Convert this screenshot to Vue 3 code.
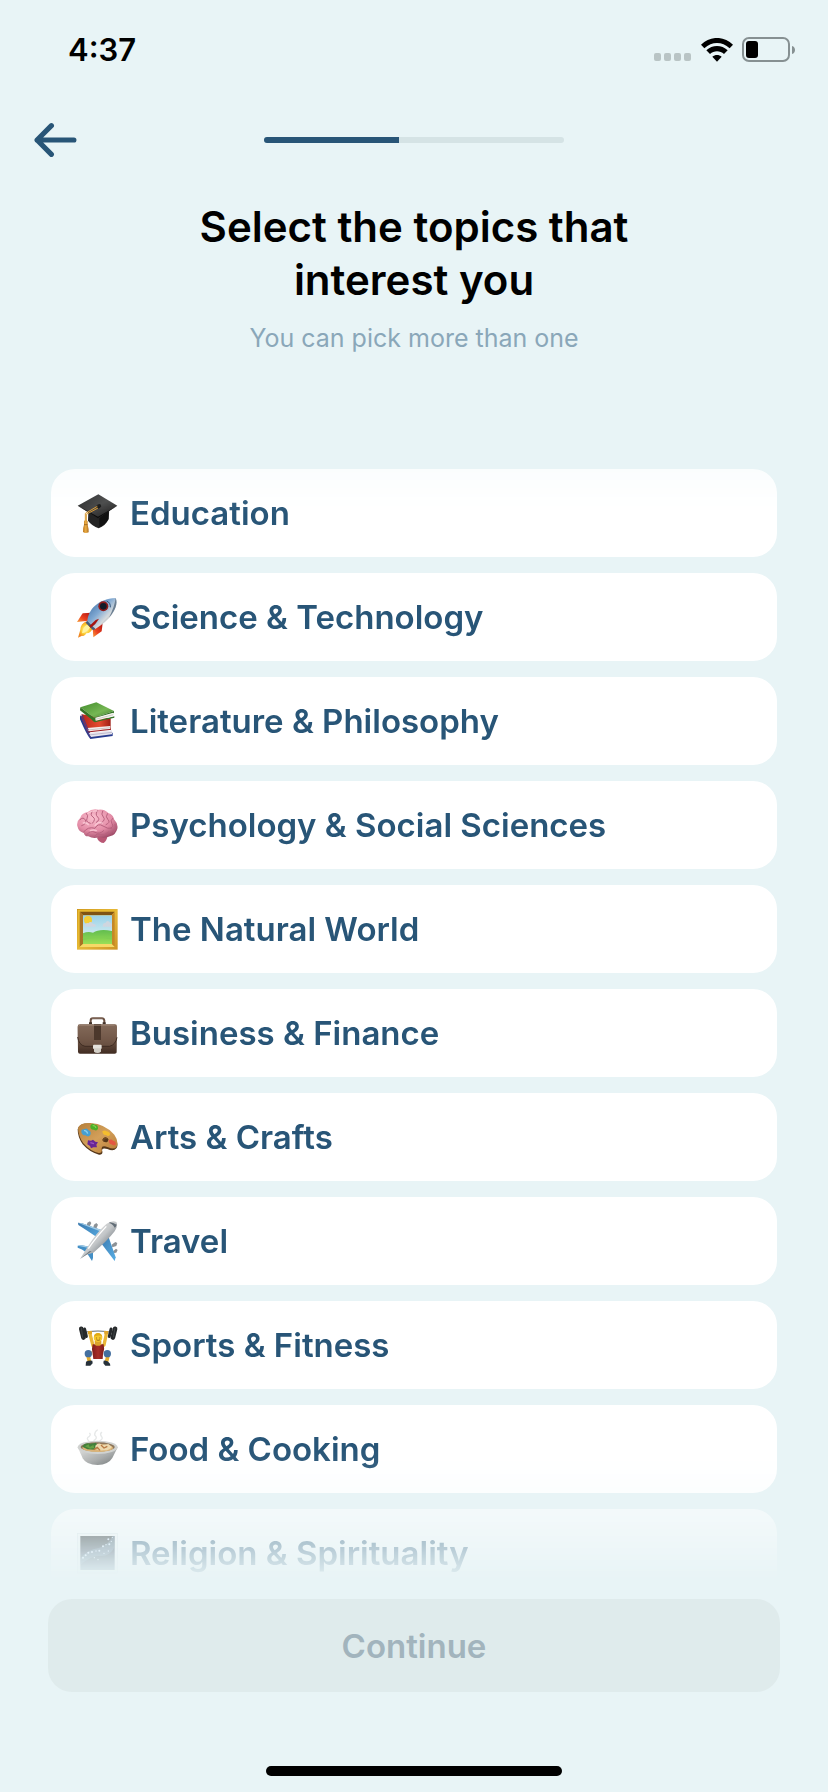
<script setup>
import { ref } from 'vue'

const topics = [
  { id: 'education', label: 'Education' },
  { id: 'science', label: 'Science & Technology' },
  { id: 'literature', label: 'Literature & Philosophy' },
  { id: 'psychology', label: 'Psychology & Social Sciences' },
  { id: 'nature', label: 'The Natural World' },
  { id: 'business', label: 'Business & Finance' },
  { id: 'arts', label: 'Arts & Crafts' },
  { id: 'travel', label: 'Travel' },
  { id: 'sports', label: 'Sports & Fitness' },
  { id: 'food', label: 'Food & Cooking' },
  { id: 'religion', label: 'Religion & Spirituality' }
]
const picked = ref([])
const progress = 45

function toggle(id) {
  picked.value = picked.value.includes(id)
    ? picked.value.filter((p) => p !== id)
    : [...picked.value, id]
}
</script>

<template>
  <div class="screen">
    <div class="status">
      <span class="time">4:37</span>
      <div class="status-icons">
        <svg class="signal" viewBox="0 0 38 8" aria-hidden="true">
          <rect x="0" y="0" width="7" height="8" rx="2" />
          <rect x="10" y="0" width="7" height="8" rx="2" />
          <rect x="20" y="0" width="7" height="8" rx="2" />
          <rect x="30" y="0" width="7" height="8" rx="2" />
        </svg>
        <svg class="wifi" viewBox="0 0 96 72" aria-hidden="true">
          <path d="M0 20C28-7 68-7 96 20L86 31C63 10 33 10 10 31Z" />
          <path d="M16 37C34 20 62 20 80 37L69 48C57 37 39 37 27 48Z" />
          <path d="M34 56C42 49 54 49 62 56L48 71Z" />
        </svg>
        <svg class="battery" viewBox="0 0 53 26" aria-hidden="true">
          <rect x="1" y="1" width="46" height="23" rx="6" fill="none" stroke="#869092" stroke-width="2" />
          <rect x="4" y="4" width="12" height="17" rx="3" fill="#000" />
          <path d="M50 9C54 10 54 16 50 17Z" fill="#869092" />
        </svg>
      </div>
    </div>

    <header class="nav">
      <button class="back" type="button" aria-label="Back">
        <svg viewBox="0 0 42 34" aria-hidden="true">
          <path d="M17 3L3 17L17 31M3 17H39" />
        </svg>
      </button>
      <div class="track" role="progressbar" aria-label="Progress" :aria-valuenow="progress" aria-valuemin="0" aria-valuemax="100">
        <div class="fill" :style="{ width: progress + '%' }"></div>
      </div>
    </header>

    <div class="intro">
      <h1>Select the topics that interest you</h1>
      <p>You can pick more than one</p>
    </div>

    <ul class="topics">
      <li v-for="t in topics" :key="t.id">
        <button class="topic" type="button" :aria-pressed="picked.includes(t.id)" @click="toggle(t.id)">
          <svg v-if="t.id === 'education'" class="icon" viewBox="0 0 126 126" aria-hidden="true">
            <defs>
              <linearGradient id="cap" x1="0" y1="0" x2="1" y2="1">
                <stop offset="0" stop-color="#1c1c1c" /><stop offset=".5" stop-color="#454545" /><stop offset="1" stop-color="#1b1b1b" />
              </linearGradient>
              <linearGradient id="tassel" x1="0" y1="0" x2="1" y2="0">
                <stop offset="0" stop-color="#b9741b" /><stop offset=".5" stop-color="#edaf45" /><stop offset="1" stop-color="#a9681b" />
              </linearGradient>
            </defs>
            <path d="M37 60L36 86Q48 102 68 109Q88 102 98 82L100 49L66 75Z" fill="#242424" />
            <path d="M70 79L98 55L97 81Q88 98 70 106Z" fill="#111" />
            <path d="M5 41L67 7L124 41L66 79Z" fill="url(#cap)" />
            <path d="M5 41L66 79L124 41L66 74Z" fill="#0c0c0c" />
            <ellipse cx="68" cy="43" rx="8" ry="6" fill="#151515" transform="rotate(-30 68 43)" />
            <path d="M64 43L28 64V94M66 48L31 67V94" fill="none" stroke="#d89a35" stroke-width="3" />
            <path d="M24 88Q29 80 35 88V98Q39 113 38 121Q28 126 21 120Q20 109 24 98Z" fill="url(#tassel)" />
            <path d="M24 98H35" stroke="#8a5212" stroke-width="2" />
          </svg>

          <svg v-else-if="t.id === 'science'" class="icon" viewBox="0 0 126 126" aria-hidden="true">
            <defs>
              <linearGradient id="hull" x1="0" y1="0" x2="1" y2="1">
                <stop offset="0" stop-color="#2f6199" /><stop offset=".42" stop-color="#7fa8d2" /><stop offset=".64" stop-color="#d5dadd" /><stop offset="1" stop-color="#696e72" />
              </linearGradient>
              <linearGradient id="fin" x1="1" y1="0" x2="0" y2="1">
                <stop offset="0" stop-color="#b01310" /><stop offset=".6" stop-color="#ec4220" /><stop offset="1" stop-color="#f7a23c" />
              </linearGradient>
              <radialGradient id="flame"><stop offset="0" stop-color="#fff7a8" /><stop offset=".6" stop-color="#fbc92d" /><stop offset="1" stop-color="#ef8623" /></radialGradient>
            </defs>
            <path d="M46 50L20 52L3 78L37 74Z" fill="url(#fin)" />
            <path d="M80 80L77 106L52 124L50 96Z" fill="url(#fin)" />
            <path d="M31 76Q14 83 13 101L6 125L18 119Q25 123 31 112Q46 112 51 94Z" fill="url(#flame)" />
            <path d="M33 86Q21 91 18 112Q36 108 42 94Z" fill="#fff4a0" />
            <path d="M34 74C37 42 64 9 119 6C128 28 112 66 58 99Z" fill="url(#hull)" />
            <path d="M119 6C126 23 118 43 99 65Q116 31 119 6Z" fill="#6b7f93" />
            <path d="M34 74L58 99L51 103L29 80Z" fill="#445d7b" />
            <path d="M40 90L59 72L69 68L58 84L44 96Z" fill="#a51512" />
            <circle cx="82" cy="31" r="15" fill="#8d1b1b" />
            <circle cx="82" cy="31" r="10" fill="#111b29" />
            <path d="M92 15Q104 20 103 34" fill="none" stroke="#31557d" stroke-width="3" />
          </svg>

          <svg v-else-if="t.id === 'literature'" class="icon" viewBox="0 0 126 126" aria-hidden="true">
            <defs>
              <linearGradient id="greenbook" x1="0" y1="0" x2="1" y2="1"><stop offset="0" stop-color="#438d2d" /><stop offset=".6" stop-color="#76b754" /><stop offset="1" stop-color="#3b7e27" /></linearGradient>
              <linearGradient id="redbook" x1="0" y1="0" x2="1" y2="0"><stop offset="0" stop-color="#b72519" /><stop offset=".6" stop-color="#e44b31" /><stop offset="1" stop-color="#9c1b13" /></linearGradient>
            </defs>
            <path d="M12 48L25 50L45 106L110 98V108L43 117Q33 107 12 58Z" fill="#273b8e" />
            <path d="M37 99L108 91V103L45 111Z" fill="#e8e6ee" />
            <path d="M38 105L108 97" stroke="#aaa5bd" stroke-width="2" />
            <path d="M17 43L104 55L104 79L105 87L33 93L17 55Z" fill="url(#redbook)" />
            <path d="M33 84L103 78V87L37 94Z" fill="#f4eeee" />
            <path d="M35 90L103 83" stroke="#baadb0" stroke-width="2" />
            <path d="M34 96L105 88" stroke="#9c1b20" stroke-width="3" />
            <path d="M13 22L61 7L114 33L54 53Z" fill="url(#greenbook)" />
            <path d="M13 22L54 53L114 33V39L61 55V62L115 49V53L57 67Q51 65 46 58L12 31Z" fill="#347326" />
            <path d="M58 53L112 38V49L59 62Z" fill="#f5f5f0" />
            <path d="M59 58L112 44" stroke="#b7b7ac" stroke-width="2" />
            <path d="M14 47L43 112M18 44L37 91" fill="none" stroke="#4b3a86" stroke-width="3" />
          </svg>

          <svg v-else-if="t.id === 'psychology'" class="icon" viewBox="0 0 126 126" aria-hidden="true">
            <defs><radialGradient id="brain" cx=".4" cy=".3" r=".75"><stop offset="0" stop-color="#fabfce" /><stop offset=".6" stop-color="#e48da7" /><stop offset="1" stop-color="#a14d6a" /></radialGradient></defs>
            <path d="M64 92Q72 88 94 94Q94 109 83 117Q70 116 64 104Z" fill="#b95875" />
            <path d="M4 66Q1 52 13 41Q17 27 35 24Q47 13 68 17Q84 15 97 27Q112 32 114 46Q127 59 124 74Q119 92 104 96Q86 104 70 99Q53 106 37 97Q26 98 23 86Q8 84 4 66Z" fill="url(#brain)" />
            <g fill="none" stroke="#b8627f" stroke-width="3" stroke-linecap="round">
              <path d="M12 47Q22 37 28 48T17 65M31 28Q38 35 33 44T43 58M49 22Q41 33 51 39T49 58M65 19Q56 31 65 39T61 55M80 21Q74 31 82 39T76 57M94 29Q87 39 96 47T90 62M110 43Q101 50 108 59T104 72" />
              <path d="M22 85Q36 66 57 73Q66 56 81 66T107 73M32 92Q43 78 57 85T83 80M55 97Q62 86 74 91T98 84M117 61Q123 75 113 85" />
            </g>
            <path d="M36 28Q48 19 63 21M22 57Q31 54 37 62M57 65Q67 51 79 57M43 80Q53 76 61 80" fill="none" stroke="#ffd6e0" stroke-width="4" stroke-linecap="round" opacity=".7" />
          </svg>

          <svg v-else-if="t.id === 'nature'" class="icon" viewBox="0 0 126 126" aria-hidden="true">
            <defs>
              <linearGradient id="gold" x1="0" y1="0" x2="1" y2="1"><stop offset="0" stop-color="#c99119" /><stop offset=".5" stop-color="#e7ba3b" /><stop offset="1" stop-color="#cf9425" /></linearGradient>
              <linearGradient id="sky" x1="0" y1="0" x2="0" y2="1"><stop offset="0" stop-color="#9ad2ea" /><stop offset="1" stop-color="#e6f5ee" /></linearGradient>
              <linearGradient id="field" x1="0" y1="0" x2="0" y2="1"><stop offset="0" stop-color="#62bd4f" /><stop offset="1" stop-color="#9ade55" /></linearGradient>
            </defs>
            <rect x="3" y="3" width="122" height="122" fill="url(#gold)" />
            <path d="M5 5H123L115 12H13V115L5 123Z" fill="#e7b92f" />
            <path d="M11 11H116L107 21H21Z" fill="#7f5414" />
            <path d="M11 11L21 21V108L11 117Z" fill="#a87324" />
            <path d="M116 12L107 21V108L116 116Z" fill="#c58826" />
            <path d="M11 117L21 108H107L116 117Z" fill="#f6d967" />
            <rect x="21" y="22" width="87" height="86" fill="url(#sky)" />
            <circle cx="36" cy="36" r="12" fill="#f5cf35" />
            <path d="M26 53Q29 43 37 46Q45 37 51 48Q61 47 59 56H27ZM80 53Q81 43 88 45Q95 34 102 44L108 49V56H80Z" fill="#cfd6df" />
            <path d="M21 76Q36 69 51 74Q71 61 108 69V108H21Z" fill="url(#field)" />
            <path d="M21 94Q58 82 108 92" fill="none" stroke="#7fce52" stroke-width="5" />
          </svg>

          <svg v-else-if="t.id === 'business'" class="icon" viewBox="0 0 126 126" aria-hidden="true">
            <defs><linearGradient id="leather" x1="0" y1="0" x2="0" y2="1"><stop offset="0" stop-color="#8c7362" /><stop offset=".55" stop-color="#6a5041" /><stop offset="1" stop-color="#402c22" /></linearGradient></defs>
            <path d="M44 36V26Q44 19 51 19H77Q84 19 85 26V36" fill="none" stroke="#6a5042" stroke-width="6" />
            <path d="M48 18H80" stroke="#a28b7b" stroke-width="2" />
            <path d="M39 31H48V37H39ZM80 31H89V37H80Z" fill="#403027" />
            <path d="M5 44Q5 37 12 37H116Q123 37 123 44L122 121Q122 125 116 125H12Q6 125 6 119Z" fill="url(#leather)" />
            <path d="M5 44Q5 37 12 37H116Q123 37 123 44V76Q121 98 101 103H27Q8 99 5 75Z" fill="#79604f" opacity=".45" />
            <path d="M5 75Q8 99 27 103H101Q119 98 123 76" fill="none" stroke="#3f2c22" stroke-width="3" />
            <path d="M54 37H75V84H54Z" fill="#4c382c" />
            <path d="M8 43Q8 40 13 40H116" fill="none" stroke="#a28a78" stroke-width="2" />
            <rect x="51" y="98" width="26" height="13" rx="3" fill="#e5e2dc" />
            <path d="M54 109H75V119Q70 123 65 123Q58 123 54 119Z" fill="#d3cfc7" />
          </svg>

          <svg v-else-if="t.id === 'arts'" class="icon" viewBox="0 0 126 126" aria-hidden="true">
            <defs><linearGradient id="wood" x1="0" y1="0" x2="1" y2="1"><stop offset="0" stop-color="#b67f3b" /><stop offset=".5" stop-color="#d3a05a" /><stop offset="1" stop-color="#b97b36" /></linearGradient></defs>
            <path d="M5 40Q9 21 43 23Q88 26 115 63Q130 86 121 97Q113 107 94 99Q80 95 78 102Q83 117 69 116Q41 109 20 85Q5 64 5 40Z" fill="#563719" />
            <path fill-rule="evenodd" d="M6 37Q10 20 43 21Q88 24 115 56Q129 76 122 92Q115 102 96 94Q75 86 77 100Q80 112 68 111Q43 106 22 82Q7 61 6 37ZM79 72Q84 81 94 78Q100 71 94 66Q83 60 79 72Z" fill="url(#wood)" />
            <path d="M79 72Q83 61 94 66L99 72Q91 66 85 71L84 78Z" fill="#6f4922" />
            <path d="M16 48Q15 38 25 40Q31 34 38 43Q47 47 43 57Q37 65 28 58Q19 59 16 48Z" fill="#469fd0" />
            <path d="M24 44Q32 42 35 53" fill="none" stroke="#8bd0ee" stroke-width="4" />
            <path d="M43 29Q49 20 56 26Q67 26 66 38Q62 47 54 41Q42 42 43 29Z" fill="#4baf28" />
            <path d="M50 29Q58 27 60 36" fill="none" stroke="#8fdb54" stroke-width="3" />
            <path d="M79 46Q86 41 92 46Q103 49 102 56Q97 63 90 57Q81 59 79 46Z" fill="#f4bd2e" />
            <path d="M98 73Q105 67 111 74Q121 76 119 86Q112 90 106 85Q98 84 98 73Z" fill="#e35743" />
            <path d="M36 73L45 74L51 71L58 77L66 79L61 86L63 94L52 94L45 97L42 90L34 85Z" fill="#682695" />
            <path d="M43 80L54 83" stroke="#9a55bd" stroke-width="4" />
          </svg>

          <svg v-else-if="t.id === 'travel'" class="icon" viewBox="0 0 126 126" aria-hidden="true">
            <defs>
              <linearGradient id="fuselage" x1="0" y1="0" x2="1" y2="1"><stop offset=".2" stop-color="#e6e6e6" /><stop offset=".5" stop-color="#c3c6c8" /><stop offset=".75" stop-color="#737b82" /></linearGradient>
              <linearGradient id="wing" x1="0" y1="0" x2="1" y2="1"><stop offset="0" stop-color="#3a78ad" /><stop offset="1" stop-color="#58aee5" /></linearGradient>
            </defs>
            <path d="M34 8L42 4L46 9L40 22L32 18ZM54 14L61 9L66 14L60 28L51 25ZM107 74L118 66L124 69L121 78L109 82ZM111 94L120 86L125 90L121 98L113 99Z" fill="#8c9297" />
            <path d="M6 8L18 10L83 32L69 56Q34 32 7 15Z" fill="url(#wing)" />
            <path d="M96 46L119 112L116 123L72 65Z" fill="url(#wing)" />
            <path d="M5 77L17 76L41 80L30 97Q18 86 5 83ZM51 91L51 114L48 123L34 101Z" fill="#438fc6" />
            <path d="M6 8L18 10L83 32L78 36ZM5 77L17 76L41 80L39 84Z" fill="#a2cbe5" />
            <path d="M12 117L36 79Q62 37 91 12Q108 0 121 6Q127 17 116 34Q92 65 52 98L31 104Z" fill="url(#fuselage)" />
            <path d="M13 116L41 93L47 94L29 106Z" fill="#707980" />
            <path d="M99 9Q109 11 116 23L119 21L122 14Q111 8 102 7Z" fill="#626d77" />
            <path d="M37 86Q58 54 91 19" fill="none" stroke="#fff" stroke-width="4" />
          </svg>

          <svg v-else-if="t.id === 'sports'" class="icon" viewBox="0 0 126 126" aria-hidden="true">
            <defs><linearGradient id="vest" x1="0" y1="0" x2="1" y2="0"><stop offset="0" stop-color="#7f1d1b" /><stop offset=".5" stop-color="#a82d27" /><stop offset="1" stop-color="#7f1d1b" /></linearGradient></defs>
            <path d="M19 26Q66 16 113 26" fill="none" stroke="#646d70" stroke-width="3" />
            <path d="M42 30L51 65Q66 78 84 63L91 30" fill="none" stroke="#eab737" stroke-width="10" stroke-linejoin="round" />
            <path d="M36 21H48V31H35ZM84 21H97V31H85Z" fill="#dfa52c" />
            <path d="M48 86L35 90L40 112M85 86L97 90L92 112" fill="none" stroke="#e4ac2f" stroke-width="11" stroke-linejoin="round" />
            <path d="M50 61H83Q87 75 81 91L80 105H52L50 89Q46 74 50 61Z" fill="url(#vest)" />
            <path d="M56 50H76V62Q66 69 56 62Z" fill="#dba32d" />
            <circle cx="66" cy="41" r="13" fill="#f5c72d" />
            <path d="M54 38Q55 27 66 27Q77 27 79 39Q72 31 54 38Z" fill="#dfa915" />
            <path d="M61 42H62M71 42H72M62 48Q66 51 71 48" fill="none" stroke="#714812" stroke-width="2" stroke-linecap="round" />
            <circle cx="37" cy="89" r="11" fill="#446f9f" /><circle cx="94" cy="89" r="11" fill="#446f9f" />
            <path d="M30 113Q38 108 49 110L50 118L43 125H29ZM83 110Q95 108 102 119L103 125H88L82 118Z" fill="#27313a" />
            <g fill="#25282a"><rect x="12" y="7" width="14" height="41" rx="7" transform="rotate(-14 19 27)" /><rect x="24" y="10" width="9" height="32" rx="5" transform="rotate(-14 29 26)" /><rect x="107" y="7" width="14" height="41" rx="7" transform="rotate(14 114 27)" /><rect x="98" y="10" width="9" height="32" rx="5" transform="rotate(14 102 26)" /></g>
            <path d="M16 11L20 41M117 12L112 40" stroke="#4c5154" stroke-width="2" />
          </svg>

          <svg v-else-if="t.id === 'food'" class="icon" viewBox="0 0 126 126" aria-hidden="true">
            <defs><linearGradient id="bowl" x1="0" y1="0" x2="1" y2="1"><stop offset="0" stop-color="#e6e6e4" /><stop offset=".6" stop-color="#a6a9a9" /><stop offset="1" stop-color="#6b7071" /></linearGradient></defs>
            <path d="M38 38Q29 31 40 25Q45 20 41 16M54 37Q67 30 56 21Q56 11 64 6M72 38Q83 32 76 25Q71 18 77 13" fill="none" stroke="#e6e8e8" stroke-width="4" stroke-linecap="round" />
            <path d="M5 57L20 91Q31 111 65 111Q97 110 109 90L125 58Z" fill="url(#bowl)" />
            <ellipse cx="65" cy="58" rx="60" ry="20" fill="#d0d2d0" />
            <ellipse cx="65" cy="57" rx="51" ry="14" fill="#8d765b" />
            <ellipse cx="65" cy="60" rx="46" ry="12" fill="#dbb478" />
            <path d="M19 56Q27 42 43 47L60 44L67 58L54 65L34 64Z" fill="#42803b" />
            <path d="M27 55L38 49L41 57L52 51L55 60L42 62Z" fill="#65a045" />
            <path d="M58 53Q68 41 80 51L97 48L108 57Q99 68 84 67Q68 69 58 62Z" fill="#edd9ae" />
            <path d="M75 51L84 60L94 55M53 65L64 58L72 67" fill="none" stroke="#b87943" stroke-width="4" />
          </svg>

          <svg v-else class="icon" viewBox="0 0 126 126" aria-hidden="true">
            <defs><linearGradient id="night" x1="0" y1="0" x2="0" y2="1"><stop offset="0" stop-color="#1c211f" /><stop offset=".45" stop-color="#253447" /><stop offset="1" stop-color="#496983" /></linearGradient></defs>
            <rect x="4" y="4" width="120" height="119" fill="#f8faf9" stroke="#dce5e8" stroke-width="2" />
            <rect x="13" y="12" width="103" height="102" fill="url(#night)" />
            <path d="M13 79Q34 53 68 48Q94 42 111 12H116V45Q101 75 69 72Q45 72 13 98Z" fill="#668eac" opacity=".45" />
            <g fill="#d4e7ff"><circle cx="97" cy="22" r="3" /><circle cx="109" cy="16" r="2" /><circle cx="100" cy="37" r="3" /><circle cx="106" cy="28" r="2" /><circle cx="90" cy="38" r="2" /><circle cx="81" cy="43" r="3" /><circle cx="70" cy="56" r="3" /><circle cx="84" cy="64" r="2" /><circle cx="97" cy="57" r="2" /><circle cx="60" cy="57" r="2" /><circle cx="48" cy="60" r="3" /><circle cx="37" cy="62" r="3" /><circle cx="29" cy="70" r="3" /><circle cx="55" cy="77" r="2" /><circle cx="21" cy="77" r="3" /><circle cx="66" cy="83" r="2" /></g>
          </svg>
          <span>{{ t.label }}</span>
        </button>
      </li>
    </ul>

    <footer class="footer">
      <button class="continue" type="button" :disabled="picked.length === 0">Continue</button>
      <div class="home-bar"></div>
    </footer>
  </div>
</template>

<style>
body {
  margin: 0;
  background: #e8f4f6;
}
</style>

<style scoped>
.screen {
  display: flex;
  flex-direction: column;
  height: 100vh;
  background: #e8f4f6;
  color: #000;
  font-family: Inter, "Liberation Sans", sans-serif;
}
button {
  border: 0;
  font-family: inherit;
  cursor: pointer;
}
.status {
  display: flex;
  align-items: center;
  justify-content: space-between;
  height: 100px;
  padding: 0 33px 0 68px;
  flex-shrink: 0;
}
.time {
  font-size: 31px;
  line-height: 36px;
  font-weight: 600;
}
.status-icons {
  display: flex;
  align-items: center;
  gap: 9px;
}
.signal {
  width: 38px;
  height: 8px;
  margin-top: 14px;
  fill: #b9c4c5;
}
.wifi {
  width: 32px;
  height: 24px;
}
.battery {
  width: 53px;
  height: 26px;
}
.nav {
  display: grid;
  grid-template-columns: 1fr 300px 1fr;
  align-items: center;
  height: 80px;
  padding: 0 34px;
  flex-shrink: 0;
}
.back {
  display: flex;
  justify-self: start;
  padding: 0;
  background: none;
}
.back svg {
  width: 43px;
  height: 36px;
  fill: none;
  stroke: #285577;
  stroke-width: 5;
  stroke-linecap: round;
  stroke-linejoin: round;
}
.track {
  height: 6px;
  border-radius: 3px;
  overflow: hidden;
  background: #d5e3e5;
}
.fill {
  height: 100%;
  background: #285577;
}
.intro {
  display: flex;
  flex-direction: column;
  align-items: center;
  gap: 16px;
  padding: 20px 48px 75px;
  text-align: center;
  flex-shrink: 0;
}
h1 {
  max-width: 480px;
  margin: 0;
  font-size: 42px;
  line-height: 53px;
  font-weight: 600;
}
p {
  margin: 0;
  font-size: 25px;
  line-height: 32px;
  color: #8aa7b9;
}
.topics {
  display: flex;
  flex-direction: column;
  gap: 16px;
  flex: 1 1 0;
  min-height: 0;
  margin: 0;
  padding: 40px 51px;
  overflow-y: auto;
  scrollbar-width: none;
  list-style: none;
  -webkit-mask-image: linear-gradient(to bottom, transparent, rgb(0 0 0 / .78) 40px, #000 84px, #000 calc(100% - 150px), rgb(0 0 0 / .86) calc(100% - 106px), rgb(0 0 0 / .5) calc(100% - 90px), rgb(0 0 0 / .3) calc(100% - 58px), transparent calc(100% - 16px));
  mask-image: linear-gradient(to bottom, transparent, rgb(0 0 0 / .78) 40px, #000 84px, #000 calc(100% - 150px), rgb(0 0 0 / .86) calc(100% - 106px), rgb(0 0 0 / .5) calc(100% - 90px), rgb(0 0 0 / .3) calc(100% - 58px), transparent calc(100% - 16px));
}
.topic {
  display: flex;
  align-items: center;
  gap: 12px;
  width: 100%;
  min-height: 88px;
  padding: 0 25px;
  border-radius: 24px;
  background: #fff;
  color: #285577;
  font-size: 33px;
  font-weight: 600;
  line-height: 40px;
  text-align: left;
}
.topic[aria-pressed="true"] {
  box-shadow: inset 0 0 0 3px #285577;
}
.icon {
  width: 42px;
  height: 42px;
  flex-shrink: 0;
}
.footer {
  display: flex;
  flex-direction: column;
  align-items: center;
  gap: 74px;
  padding: 0 48px 16px;
  flex-shrink: 0;
}
.continue {
  width: 100%;
  min-height: 93px;
  border-radius: 24px;
  background: #285577;
  color: #fff;
  font-size: 33px;
  font-weight: 600;
  line-height: 40px;
}
.continue:disabled {
  background: #dfebec;
  color: #a2b4bd;
  cursor: default;
}
.home-bar {
  width: 296px;
  height: 10px;
  border-radius: 5px;
  background: #000;
}
</style>
